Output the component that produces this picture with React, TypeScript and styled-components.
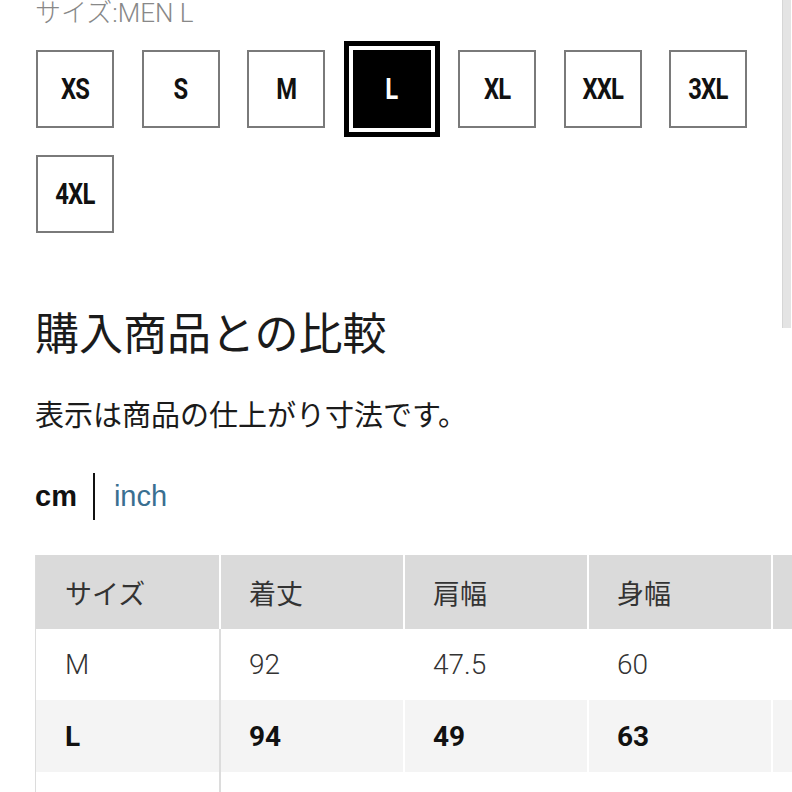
import React from 'react';
import styled, { createGlobalStyle } from 'styled-components';

const GlobalStyle = createGlobalStyle`
  html, body {
    margin: 0;
    padding: 0;
    background: #fff;
    overflow: hidden;
  }
  body {
    font-family: Roboto, "Noto Sans CJK JP", sans-serif;
    color: #1b1b1b;
  }
`;

const Page = styled.div`
  position: relative;
  height: 792px;
  overflow: hidden;
  padding-left: 35px;
  box-sizing: border-box;
`;

const ScrollThumb = styled.div`
  position: absolute;
  top: 0;
  right: 1px;
  width: 8px;
  height: 328px;
  background: #e4e4e4;
  border-left: 1px solid #d6d6d6;
`;

const SizeLabel = styled.div`
  margin-top: 1px;
  font-size: 26px;
  line-height: 25px;
  font-weight: 300;
  color: #888;
`;

const SizeGrid = styled.div`
  display: flex;
  flex-wrap: wrap;
  column-gap: 27.5px;
  row-gap: 27px;
  margin-top: 24px;
  padding-left: 1px;
  width: 740px;
`;

const SizeBox = styled.button<{ $active?: boolean }>`
  width: 78px;
  height: 78px;
  box-sizing: border-box;
  margin: 0;
  padding: 0;
  display: flex;
  align-items: center;
  justify-content: center;
  border: 2px solid ${(p) => (p.$active ? '#000' : '#7a7a7a')};
  background: ${(p) => (p.$active ? '#000' : '#fff')};
  color: ${(p) => (p.$active ? '#fff' : '#111')};
  box-shadow: ${(p) => (p.$active ? '0 0 0 4px #fff, 0 0 0 9px #000' : 'none')};
  font-family: Roboto, sans-serif;
  font-weight: 700;
  font-size: 29px;
  letter-spacing: -1px;
`;

const SizeText = styled.span`
  display: inline-block;
  transform: scaleX(0.82);
`;

const Title = styled.h2`
  margin: 70px 0 0;
  font-family: "Noto Sans CJK JP", sans-serif;
  font-size: 44px;
  line-height: 56px;
  font-weight: 400;
  color: #1b1b1b;
`;

const Note = styled.p`
  margin: 34px 0 0;
  font-family: "Noto Sans CJK JP", sans-serif;
  font-size: 29px;
  line-height: 40px;
  font-weight: 400;
  color: #1b1b1b;
`;

const UnitRow = styled.div`
  display: flex;
  align-items: center;
  height: 47px;
  margin-top: 40px;
  font-family: "Liberation Sans", Arial, sans-serif;
  font-size: 29px;
`;

const Unit = styled.span<{ $active?: boolean }>`
  font-weight: ${(p) => (p.$active ? 700 : 400)};
  color: ${(p) => (p.$active ? '#111' : '#3a6f91')};
`;

const UnitDivider = styled.span`
  width: 2px;
  height: 47px;
  margin: 0 19px 0 16px;
  background: #111;
`;

const Table = styled.div`
  margin-top: 35px;
  width: max-content;
`;

const Row = styled.div<{ $bg: string; $h: number }>`
  display: grid;
  grid-template-columns: 184px repeat(4, 182px);
  column-gap: 2px;
  height: ${(p) => p.$h}px;
  background: #fff;

  & > div {
    background: ${(p) => p.$bg};
  }
`;

const Cell = styled.div<{ $first?: boolean; $head?: boolean; $bold?: boolean }>`
  display: flex;
  align-items: center;
  box-sizing: border-box;
  padding-left: ${(p) => (p.$first ? 29 : 28)}px;
  border-left: ${(p) => (p.$first ? '1px solid #dcdcdc' : 'none')};
  border-right: ${(p) => (p.$first && !p.$head ? '2px solid #dcdcdc' : 'none')};
  margin-right: ${(p) => (p.$first && !p.$head ? '-2px' : '0')};
  font-family: ${(p) => (p.$head ? '"Noto Sans CJK JP", sans-serif' : 'Roboto, sans-serif')};
  font-size: ${(p) => (p.$head ? 27 : 28)}px;
  font-weight: ${(p) => (p.$bold ? 700 : p.$head ? 400 : 300)};
  color: ${(p) => (p.$bold ? '#111' : '#333')};
`;

const sizes = ['XS', 'S', 'M', 'L', 'XL', 'XXL', '3XL', '4XL'];

// the fifth column runs past the right edge, so only its background shows
const headers = ['サイズ', '着丈', '肩幅', '身幅', ''];

const rows = [
  { id: 'm', cells: ['M', '92', '47.5', '60', ''], bg: '#fff', h: 71, bold: false },
  { id: 'l', cells: ['L', '94', '49', '63', ''], bg: '#f4f4f4', h: 72, bold: true },
  { id: 'next', cells: ['', '', '', '', ''], bg: '#fff', h: 72, bold: false },
];

export default function App() {
  return (
    <Page>
      <GlobalStyle />
      <SizeLabel>サイズ:MEN L</SizeLabel>

      <SizeGrid>
        {sizes.map((s) => (
          <SizeBox key={s} $active={s === 'L'}>
            <SizeText>{s}</SizeText>
          </SizeBox>
        ))}
      </SizeGrid>

      <Title>購入商品との比較</Title>
      <Note>表示は商品の仕上がり寸法です。</Note>

      <UnitRow>
        <Unit $active>cm</Unit>
        <UnitDivider />
        <Unit>inch</Unit>
      </UnitRow>

      <Table>
        <Row $bg="#dadada" $h={74}>
          {headers.map((h, i) => (
            <Cell key={i} $head $first={i === 0}>
              {h}
            </Cell>
          ))}
        </Row>
        {rows.map((r) => (
          <Row key={r.id} $bg={r.bg} $h={r.h}>
            {r.cells.map((c, i) => (
              <Cell key={i} $first={i === 0} $bold={r.bold}>
                {c}
              </Cell>
            ))}
          </Row>
        ))}
      </Table>

      <ScrollThumb />
    </Page>
  );
}
